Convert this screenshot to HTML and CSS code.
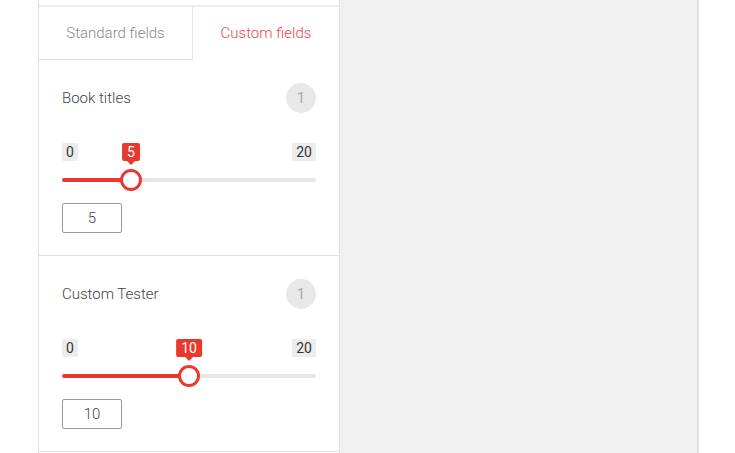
FILE: index.html
```html
<!DOCTYPE html>
<html lang="en">
<head>
<meta charset="UTF-8">
<title>Custom fields</title>
<link rel="stylesheet" href="styles.css">
</head>
<body>

<div class="page">
    <div class="panel">
        <div class="panel-top"></div>
        <div class="tabs">
            <div class="tab">Standard fields</div>
            <div class="tab active">Custom fields</div>
        </div>

        <div class="field">
            <div class="field-head">
                <span class="field-name">Book titles</span>
                <span class="badge">1</span>
            </div>
            <div class="slider">
                <div class="scale">
                    <span>0</span>
                    <span>20</span>
                </div>
                <div class="tip" style="left: 69px;">5</div>
                <div class="track">
                    <div class="fill" style="width: 69px;"></div>
                    <div class="thumb" style="left: 69px;"></div>
                </div>
            </div>
            <input class="value" type="text" value="5">
        </div>

        <div class="field">
            <div class="field-head">
                <span class="field-name">Custom Tester</span>
                <span class="badge">1</span>
            </div>
            <div class="slider">
                <div class="scale">
                    <span>0</span>
                    <span>20</span>
                </div>
                <div class="tip" style="left: 127px;">10</div>
                <div class="track">
                    <div class="fill" style="width: 127px;"></div>
                    <div class="thumb" style="left: 127px;"></div>
                </div>
            </div>
            <input class="value" type="text" value="10">
        </div>
    </div>

    <div class="preview"></div>
</div>

</body>
</html>
```

FILE: styles.css
```css
body {
    margin: 0;
    background-color: #fff;
    font-family: Roboto, "Liberation Sans", sans-serif;
    font-size: 15px;
    color: #555;
}

.page {
    display: flex;
    height: 453px;
    padding-left: 38px;
}

.panel {
    width: 300px;
    border-left: 1px solid #e2e2e2;
    border-right: 1px solid #e2e2e2;
    background-color: #fff;
}

.panel-top {
    height: 5px;
    border-bottom: 2px solid #ececec;
}

.tabs {
    display: flex;
    height: 53px;
}

.tab {
    display: flex;
    align-items: center;
    justify-content: center;
    color: #8a8a8a;
    font-weight: 300;
    width: 153px;
    border-bottom: 1px solid #e0e0e0;
    border-right: 1px solid #e6e6e6;
}

.tab.active {
    flex: 1;
    color: #e8484a;
    border-bottom-color: transparent;
    border-right: none;
}

.field {
    padding: 23px 23px 22px 23px;
    border-bottom: 1px solid #e2e2e2;
}

.field-head {
    display: flex;
    align-items: center;
    justify-content: space-between;
    height: 30px;
}

.field-name {
    font-weight: 300;
    color: #444;
}

.badge {
    width: 30px;
    height: 30px;
    border-radius: 50%;
    background-color: #e8e8e8;
    color: #aaa;
    display: flex;
    align-items: center;
    justify-content: center;
}

.slider {
    position: relative;
    margin-top: 30px;
}

.scale {
    display: flex;
    justify-content: space-between;
    height: 18px;
}

.scale span {
    background-color: #ececec;
    color: #333;
    font-size: 14px;
    line-height: 18px;
    padding: 0 4px;
    border-radius: 2px;
}

.tip {
    position: absolute;
    top: 0;
    transform: translateX(-50%);
    background-color: #e8392f;
    color: #fff;
    font-size: 14px;
    line-height: 18px;
    padding: 0 5px;
    border-radius: 2px;
}

.tip::after {
    content: "";
    position: absolute;
    left: 50%;
    bottom: -4px;
    margin-left: -4px;
    border-left: 4px solid transparent;
    border-right: 4px solid transparent;
    border-top: 4px solid #e8392f;
}

.track {
    position: relative;
    height: 4px;
    margin-top: 17px;
    background-color: #e6e6e6;
    border-radius: 2px;
}

.fill {
    height: 100%;
    background-color: #e8392f;
    border-radius: 2px;
}

.thumb {
    position: absolute;
    top: 50%;
    width: 22px;
    height: 22px;
    margin: -11px 0 0 -11px;
    box-sizing: border-box;
    border: 3px solid #e8392f;
    border-radius: 50%;
    background-color: #fff;
}

.value {
    display: block;
    box-sizing: border-box;
    width: 60px;
    height: 30px;
    margin-top: 21px;
    border: 1px solid #999;
    border-radius: 2px;
    text-align: center;
    font-family: Roboto, "Liberation Sans", sans-serif;
    font-size: 15px;
    font-weight: 300;
    color: #444;
    padding: 0;
}

.preview {
    width: 357px;
    background-color: #f0f0f0;
    border-right: 2px solid #e0e0e0;
}
```
